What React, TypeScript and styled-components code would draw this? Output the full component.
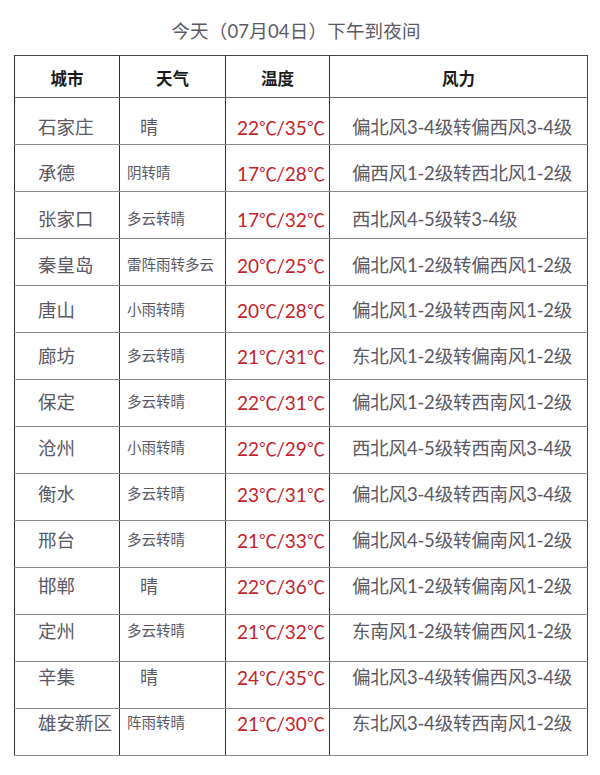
import React from 'react'
import styled, { createGlobalStyle } from 'styled-components'

const GlobalStyle = createGlobalStyle`
  html, body {
    margin: 0;
    padding: 0;
    background: #fff;
  }
  body {
    font-family: "Lato", "Noto Sans CJK SC", sans-serif;
  }
`

type Row = {
  city: string
  weather: string
  low: number
  high: number
  wind: string
}

const rows: Row[] = [
  { city: '石家庄', weather: '晴', low: 22, high: 35, wind: '偏北风3-4级转偏西风3-4级' },
  { city: '承德', weather: '阴转晴', low: 17, high: 28, wind: '偏西风1-2级转西北风1-2级' },
  { city: '张家口', weather: '多云转晴', low: 17, high: 32, wind: '西北风4-5级转3-4级' },
  { city: '秦皇岛', weather: '雷阵雨转多云', low: 20, high: 25, wind: '偏北风1-2级转偏西风1-2级' },
  { city: '唐山', weather: '小雨转晴', low: 20, high: 28, wind: '偏北风1-2级转西南风1-2级' },
  { city: '廊坊', weather: '多云转晴', low: 21, high: 31, wind: '东北风1-2级转偏南风1-2级' },
  { city: '保定', weather: '多云转晴', low: 22, high: 31, wind: '偏北风1-2级转西南风1-2级' },
  { city: '沧州', weather: '小雨转晴', low: 22, high: 29, wind: '西北风4-5级转西南风3-4级' },
  { city: '衡水', weather: '多云转晴', low: 23, high: 31, wind: '偏北风3-4级转西南风3-4级' },
  { city: '邢台', weather: '多云转晴', low: 21, high: 33, wind: '偏北风4-5级转偏南风1-2级' },
  { city: '邯郸', weather: '晴', low: 22, high: 36, wind: '偏北风1-2级转偏南风1-2级' },
  { city: '定州', weather: '多云转晴', low: 21, high: 32, wind: '东南风1-2级转偏西风1-2级' },
  { city: '辛集', weather: '晴', low: 24, high: 35, wind: '偏北风3-4级转偏西风3-4级' },
  { city: '雄安新区', weather: '阵雨转晴', low: 21, high: 30, wind: '东北风3-4级转西南风1-2级' },
]

export default function App() {
  return (
    <Page>
      <GlobalStyle />
      <Title>今天（07月04日）下午到夜间</Title>
      <Table>
        <colgroup>
          <col style={{ width: 105 }} />
          <col style={{ width: 106 }} />
          <col style={{ width: 104 }} />
          <col />
        </colgroup>
        <thead>
          <HeadRow>
            <Th>城市</Th>
            <Th>天气</Th>
            <Th>温度</Th>
            <Th>风力</Th>
          </HeadRow>
        </thead>
        <tbody>
          {rows.map((r, i) => (
            <BodyRow key={r.city} $index={i}>
              <City>{r.city}</City>
              <Weather $single={r.weather.length === 1}>{r.weather}</Weather>
              <Temp>
                {r.low}
                <Deg>℃</Deg>/{r.high}
                <Deg>℃</Deg>
              </Temp>
              <Wind>{r.wind}</Wind>
            </BodyRow>
          ))}
        </tbody>
      </Table>
    </Page>
  )
}

const Page = styled.div`
  width: 600px;
  padding: 18px 0 0 14px;
  box-sizing: border-box;
`

const Title = styled.div`
  width: 574px;
  padding-right: 10px;
  box-sizing: border-box;
  text-align: center;
  font-size: 18.5px;
  line-height: 26px;
  color: #5b5a64;
  letter-spacing: 0.2px;
  margin-bottom: 11px;
`

const Table = styled.table`
  width: 574px;
  border-collapse: collapse;
  table-layout: fixed;
  border: 1px solid #444;
`

const HeadRow = styled.tr`
  height: 42px;
`

// text drifts upward a little row by row in the source picture
const BodyRow = styled.tr<{ $index: number }>`
  height: 47px;

  & > td {
    padding-top: ${(p) => Math.max(0, 17 - p.$index * 1.15)}px;
  }
`

const Th = styled.th`
  border-left: 1px solid #333;
  border-bottom: 1px solid #666;
  font-size: 16.5px;
  font-weight: 700;
  color: #1a1a1a;
  text-align: center;
  vertical-align: middle;
  padding: 3px 0 0;
`

const Cell = styled.td`
  border-left: 1px solid #333;
  border-bottom: 1px solid #888;
  vertical-align: top;
  white-space: nowrap;
  color: #595864;
  line-height: 24px;
  padding-bottom: 0;
  padding-right: 0;
`

const City = styled(Cell)`
  font-size: 18.5px;
  padding-left: 23px;
`

const Weather = styled(Cell)<{ $single: boolean }>`
  font-size: ${(p) => (p.$single ? '18px' : '14.5px')};
  padding-left: ${(p) => (p.$single ? '20px' : '7px')};
`

const Temp = styled(Cell)`
  font-size: 19px;
  color: #c3222b;
  padding-left: 11px;
`

const Deg = styled.span`
  font-family: "Noto Sans CJK SC", sans-serif;
  font-size: 18px;
  letter-spacing: -0.8px;
`

const Wind = styled(Cell)`
  font-size: 18.5px;
  padding-left: 22px;
  letter-spacing: -0.2px;
`
